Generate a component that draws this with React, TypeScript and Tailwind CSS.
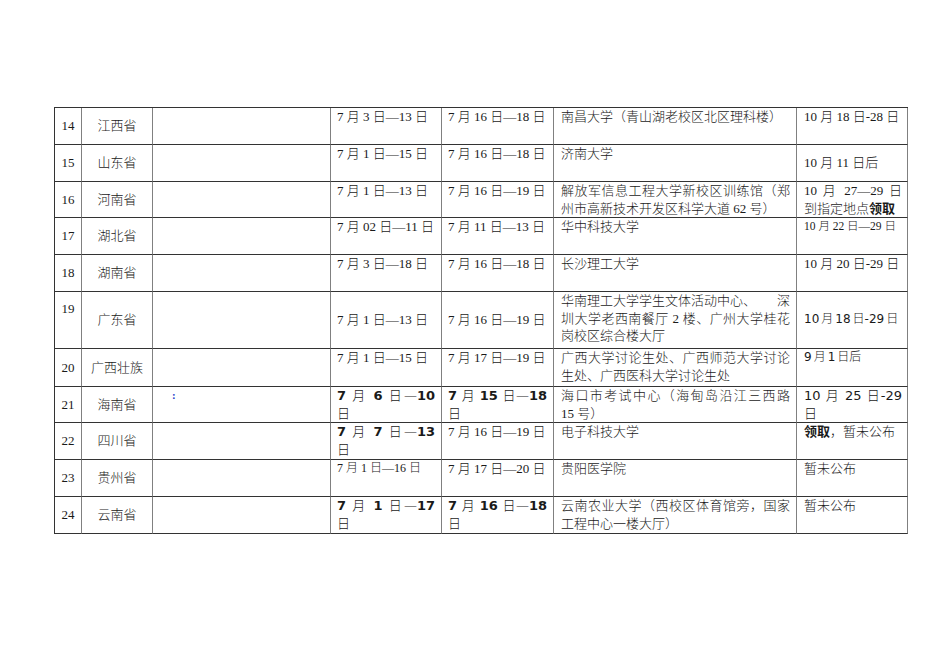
import React from "react";

const serif = "font-['Liberation_Serif','Noto_Sans_CJK_SC',serif]";
const sans = "font-['DejaVu_Sans','Noto_Sans_CJK_SC',sans-serif] font-normal";

function J({ children, className = "" }: { children: React.ReactNode; className?: string }) {
  return <div className={"text-justify [text-align-last:justify] " + className}>{children}</div>;
}

const Bold = ({ children }: { children: React.ReactNode }) => (
  <span className="font-bold">{children}</span>
);

const L = ({ children }: { children: React.ReactNode }) => (
  <span className="font-light">{children}</span>
);

type Row = {
  n: string;
  prov: string;
  numTop?: boolean;
  c3?: React.ReactNode;
  c4: React.ReactNode;
  c5: React.ReactNode;
  mid45?: boolean;
  c6: React.ReactNode;
  c7: React.ReactNode;
  mid7?: boolean;
};

const rows: Row[] = [
  {
    n: "14",
    prov: "江西省",
    c4: "7 月 3 日—13 日",
    c5: "7 月 16 日—18 日",
    c6: "南昌大学（青山湖老校区北区理科楼）",
    c7: "10 月 18 日-28 日",
  },
  {
    n: "15",
    prov: "山东省",
    c4: "7 月 1 日—15 日",
    c5: "7 月 16 日—18 日",
    c6: "济南大学",
    c7: "10 月 11 日后",
    mid7: true,
  },
  {
    n: "16",
    prov: "河南省",
    c4: "7 月 1 日—13 日",
    c5: "7 月 16 日—19 日",
    c6: (
      <div>
        <J>解放军信息工程大学新校区训练馆（郑</J>
        <div>州市高新技术开发区科学大道 62 号）</div>
      </div>
    ),
    c7: (
      <div>
        <J>10 月 27—29 日</J>
        <div>
          到指定地点<Bold>领取</Bold>
        </div>
      </div>
    ),
  },
  {
    n: "17",
    prov: "湖北省",
    c4: "7 月 02 日—11 日",
    c5: "7 月 11 日—13 日",
    c6: "华中科技大学",
    c7: <span className="text-[11.5px]">10 月 22 日—29 日</span>,
  },
  {
    n: "18",
    prov: "湖南省",
    c4: "7 月 3 日—18 日",
    c5: "7 月 16 日—18 日",
    c6: "长沙理工大学",
    c7: "10 月 20 日-29 日",
  },
  {
    n: "19",
    prov: "广东省",
    numTop: true,
    mid45: true,
    c4: "7 月 1 日—13 日",
    c5: "7 月 16 日—19 日",
    c6: (
      <div>
        <div className="flex justify-between">
          <span>华南理工大学学生文体活动中心、</span>
          <span>深</span>
        </div>
        <J>圳大学老西南餐厅 2 楼、广州大学桂花</J>
        <div>岗校区综合楼大厅</div>
      </div>
    ),
    c7: (
      <span className={sans + " whitespace-nowrap text-[12px]"}>
        10&#8198;<L>月</L>&#8198;18&#8198;<L>日</L>-29&#8198;<L>日</L>
      </span>
    ),
    mid7: true,
  },
  {
    n: "20",
    prov: "广西壮族",
    c4: "7 月 1 日—15 日",
    c5: "7 月 17 日—19 日",
    c6: (
      <div>
        <J>广西大学讨论生处、广西师范大学讨论</J>
        <div>生处、广西医科大学讨论生处</div>
      </div>
    ),
    c7: (
      <span className={sans + " whitespace-nowrap text-[12px]"}>
        9&#8198;<L>月</L>&#8198;1&#8198;<L>日后</L>
      </span>
    ),
  },
  {
    n: "21",
    prov: "海南省",
    c3: (
      <div className="pl-[19px] pt-[2px] text-[11px] leading-[12px] font-bold text-[#1a3cc8]">:</div>
    ),
    c4: (
      <div className={sans}>
        <J>
          <Bold>7</Bold> <L>月</L> <Bold>6</Bold> <L>日—</L>
          <Bold>10</Bold>
        </J>
        <div>
          <L>日</L>
        </div>
      </div>
    ),
    c5: (
      <div className={sans}>
        <J>
          <Bold>7</Bold> <L>月</L> <Bold>15</Bold> <L>日—</L>
          <Bold>18</Bold>
        </J>
        <div>
          <L>日</L>
        </div>
      </div>
    ),
    c6: (
      <div>
        <J>海口市考试中心（海甸岛沿江三西路</J>
        <div>15 号）</div>
      </div>
    ),
    c7: (
      <div className={sans}>
        <J>
          10 <L>月</L> 25 <L>日</L>-29
        </J>
        <div>
          <L>日</L>
        </div>
      </div>
    ),
  },
  {
    n: "22",
    prov: "四川省",
    c4: (
      <div className={sans}>
        <J>
          <Bold>7</Bold> <L>月</L> <Bold>7</Bold> <L>日—</L>
          <Bold>13</Bold>
        </J>
        <div>
          <L>日</L>
        </div>
      </div>
    ),
    c5: "7 月 16 日—19 日",
    c6: "电子科技大学",
    c7: (
      <div>
        <Bold>领取</Bold>，暂未公布
      </div>
    ),
  },
  {
    n: "23",
    prov: "贵州省",
    c4: <span className="text-[12px]">7 月 1 日—16 日</span>,
    c5: "7 月 17 日—20 日",
    c6: "贵阳医学院",
    c7: "暂未公布",
  },
  {
    n: "24",
    prov: "云南省",
    c4: (
      <div className={sans}>
        <J>
          <Bold>7</Bold> <L>月</L> <Bold>1</Bold> <L>日—</L>
          <Bold>17</Bold>
        </J>
        <div>
          <L>日</L>
        </div>
      </div>
    ),
    c5: (
      <div className={sans}>
        <J>
          <Bold>7</Bold> <L>月</L> <Bold>16</Bold> <L>日—</L>
          <Bold>18</Bold>
        </J>
        <div>
          <L>日</L>
        </div>
      </div>
    ),
    c6: (
      <div>
        <J>云南农业大学（西校区体育馆旁，国家</J>
        <div>工程中心一楼大厅）</div>
      </div>
    ),
    c7: "暂未公布",
  },
];

const cell =
  "border-r border-r-[#808080] border-b border-b-[#333] text-[13px] leading-[17.5px] text-[#1a1a1a] min-w-0";

export default function App() {
  return (
    <div className={"min-h-[672px] w-[950px] bg-white pl-[54px] pt-[107px] font-light " + serif}>
      <div className="grid w-[854px] grid-cols-[27px_71px_178px_111px_112px_243px_111px] grid-rows-[37px_37px_36px_37px_37px_57px_38px_36px_37px_37px_37px] border-l border-t border-l-[#333] border-t-[#333]">
        {rows.map((r) => (
          <React.Fragment key={r.n}>
            <div
              className={
                cell +
                " flex flex-col items-center " +
                (r.numTop ? "justify-start pt-[8px]" : "justify-center")
              }
            >
              {r.n}
            </div>
            <div className={cell + " flex flex-col items-center justify-center"}>{r.prov}</div>
            <div className={cell}>{r.c3}</div>
            <div className={cell + " flex flex-col px-[6px] " + (r.mid45 ? "justify-center" : "justify-start")}>
              {r.c4}
            </div>
            <div className={cell + " flex flex-col px-[6px] " + (r.mid45 ? "justify-center" : "justify-start")}>
              {r.c5}
            </div>
            <div className={cell + " flex flex-col pl-[7px] pr-[6px]"}>{r.c6}</div>
            <div className={cell + " flex flex-col pl-[7px] pr-[5px] " + (r.mid7 ? "justify-center" : "justify-start")}>
              {r.c7}
            </div>
          </React.Fragment>
        ))}
      </div>
    </div>
  );
}
